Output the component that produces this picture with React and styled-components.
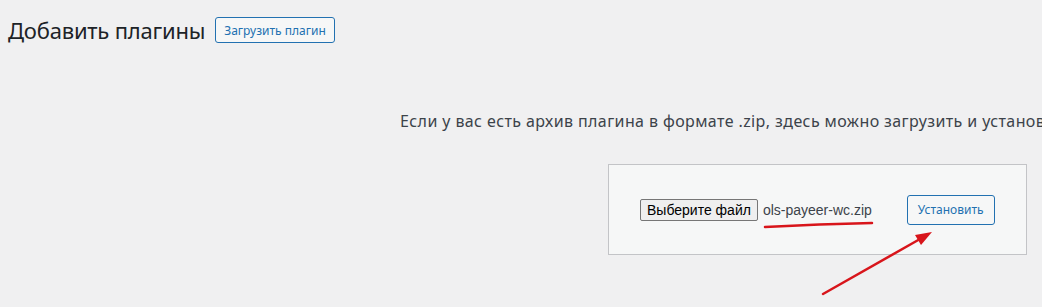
import React from "react";
import styled, { createGlobalStyle } from "styled-components";

const GlobalStyle = createGlobalStyle`
  html, body {
    margin: 0;
    padding: 0;
    background: #f0f0f1;
    font-family: "Noto Sans", "Open Sans", sans-serif;
    color: #1d2327;
  }
`;

const Page = styled.div`
  position: relative;
  width: 1042px;
  height: 307px;
  overflow: hidden;
`;

const Header = styled.div`
  display: flex;
  align-items: center;
  gap: 10px;
  padding: 17px 0 0 8px;
`;

const Title = styled.h1`
  margin: 0;
  font-size: 22px;
  font-weight: 400;
  line-height: 26px;
  letter-spacing: -0.2px;
  color: #1d2327;
`;

const OutlineButton = styled.button`
  height: ${(p) => p.$h || 26}px;
  padding: 0 ${(p) => p.$px || 8}px;
  background: #f6f7f7;
  border: 1px solid #2271b1;
  border-radius: 3px;
  color: #2271b1;
  font-family: "Noto Sans", "Open Sans", sans-serif;
  font-size: 12px;
  white-space: nowrap;
  cursor: pointer;
`;

const Help = styled.p`
  margin: 0;
  padding: 67px 0 0 400px;
  font-size: 16px;
  line-height: 22px;
  color: #3c434a;
  white-space: nowrap;
  letter-spacing: 0.4px;
`;

const UploadBox = styled.div`
  position: relative;
  box-sizing: border-box;
  margin: 32px 0 0 608px;
  width: 419px;
  height: 91px;
  background: #f6f7f7;
  border: 1px solid #c3c4c7;
  display: flex;
  align-items: center;
  padding-left: 31px;
`;

const FileButton = styled.span`
  display: inline-flex;
  align-items: center;
  box-sizing: border-box;
  height: 22px;
  padding: 0 6px;
  background: #efefef;
  border: 1px solid #767676;
  border-radius: 2px;
  font-family: "Liberation Sans", Arial, sans-serif;
  font-size: 14px;
  color: #000;
  white-space: nowrap;
`;

const FileName = styled.span`
  margin-left: 5px;
  font-family: "Liberation Sans", Arial, sans-serif;
  font-size: 14px;
  color: #3c434a;
  white-space: nowrap;
`;

const InstallWrap = styled.div`
  margin-left: 35px;
  display: flex;
`;

const Marks = styled.svg`
  position: absolute;
  left: 0;
  top: 0;
  pointer-events: none;
`;

export default function App() {
  return (
    <>
      <GlobalStyle />
      <Page>
        <Header>
          <Title>Добавить плагины</Title>
          <OutlineButton $h={26} $px={8}>Загрузить плагин</OutlineButton>
        </Header>
        <Help>
          Если у вас есть архив плагина в формате .zip, здесь можно загрузить и установить его.
        </Help>
        <UploadBox>
          <FileButton>Выберите файл</FileButton>
          <FileName>ols-payeer-wc.zip</FileName>
          <InstallWrap>
            <OutlineButton $h={30} $px={10}>Установить</OutlineButton>
          </InstallWrap>
        </UploadBox>
        <Marks width="1042" height="307" viewBox="0 0 1042 307">
          <path
            d="M765 227 Q820 224 872 223"
            stroke="#d8151b"
            strokeWidth="2.5"
            fill="none"
            strokeLinecap="round"
          />
          <path
            d="M823 294 L920 239"
            stroke="#d8151b"
            strokeWidth="2.5"
            fill="none"
            strokeLinecap="round"
          />
          <path d="M932 232 L915 235 L921 245 Z" fill="#d8151b" />
        </Marks>
      </Page>
    </>
  );
}
